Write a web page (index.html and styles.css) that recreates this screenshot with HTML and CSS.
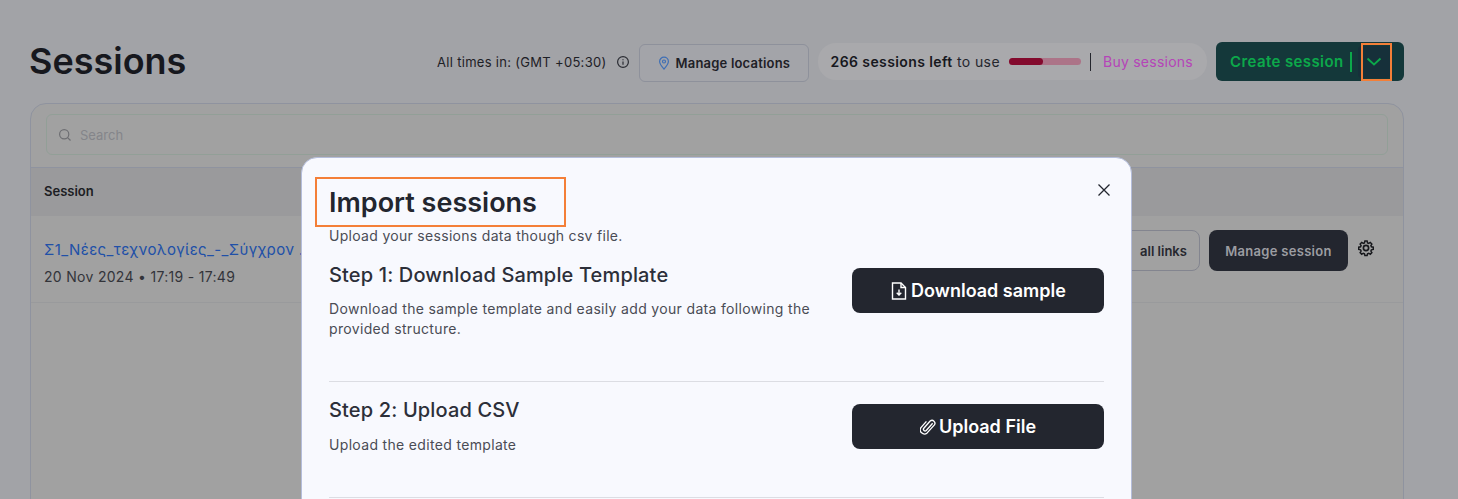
FILE: index.html
```html
<!DOCTYPE html>
<html lang="en">

<head>
    <meta charset="UTF-8">
    <meta name="viewport" content="width=device-width, initial-scale=1.0">
    <title>Sessions</title>
    <link rel="stylesheet" href="styles.css">
</head>

<body>

    <div class="page">
        <header class="top-bar">
            <h1>Sessions</h1>
            <div class="top-actions">
                <span class="timezone">All times in: (GMT +05:30)</span>
                <svg class="info-icon" width="14" height="14" viewBox="0 0 14 14" fill="none" stroke="#2a2c33" stroke-width="1.2">
                    <circle cx="7" cy="7" r="5.4" />
                    <path d="M7 6.4v3.4M7 4.2v1" />
                </svg>
                <button class="locations-btn">
                    <svg width="12" height="14" viewBox="0 0 12 14" fill="none" stroke="#3f6fb5" stroke-width="1.2">
                        <path d="M6 13C3.6 10.4 1.6 8.3 1.6 5.6a4.4 4.4 0 0 1 8.8 0C10.4 8.3 8.4 10.4 6 13z" />
                        <circle cx="6" cy="5.5" r="1.5" />
                    </svg>
                    Manage locations
                </button>
                <div class="usage-pill">
                    <span><b>266 sessions left</b> to use</span>
                    <div class="usage-bar">
                        <div class="usage-fill"></div>
                    </div>
                    <div class="usage-line"></div>
                    <a class="buy-link">Buy sessions</a>
                </div>
                <div class="create-btn">
                    <span class="create-label">Create session</span>
                    <span class="create-line"></span>
                    <span class="create-arrow">
                        <svg width="16" height="10" viewBox="0 0 16 10" fill="none" stroke="#0ca84a" stroke-width="1.8">
                            <path d="M1.500 1.500 8 7.500l6.500-6" />
                        </svg>
                    </span>
                    <span class="mark mark-arrow"></span>
                </div>
            </div>
        </header>

        <section class="card">
            <div class="search-wrap">
                <div class="search-box">
                    <svg width="14" height="14" viewBox="0 0 14 14" fill="none" stroke="#6d6e72" stroke-width="1.2">
                        <circle cx="6.200" cy="6.200" r="4.600" />
                        <path d="M9.600 9.600 12.500 12.500" />
                    </svg>
                    <span>Search</span>
                </div>
            </div>
            <div class="table-head">Session</div>
            <div class="table-row">
                <div class="session-info">
                    <a class="session-name">Σ1_Νέες_τεχνολογίες_-_Σύγχρον ...</a>
                    <p class="session-time">20 Nov 2024 • 17:19 - 17:49</p>
                </div>
                <div class="row-actions">
                    <button class="links-btn">all links</button>
                    <button class="manage-btn">Manage session</button>
                    <svg class="gear" width="18" height="18" viewBox="0 0 24 24" fill="none" stroke="#17181c" stroke-width="2.200">
                        <path d="M10.300 2.500h3.400l.6 2.800 1.800.8 2.400-1.500 2.400 2.400-1.500 2.400.8 1.800 2.800.6v3.400l-2.800.6-.8 1.800 1.500 2.400-2.400 2.400-2.400-1.500-1.800.8-.6 2.800h-3.400l-.6-2.800-1.800-.8-2.400 1.500-2.400-2.400 1.500-2.400-.8-1.800-2.800-.6v-3.400l2.800-.6.8-1.800-1.500-2.400 2.400-2.400 2.400 1.500 1.800-.8z" transform="translate(12 12) scale(.88) translate(-12 -13)" />
                        <circle cx="12" cy="12" r="3.500" />
                    </svg>
                </div>
            </div>
        </section>
    </div>

    <div class="modal">
        <svg class="modal-close" width="14" height="14" viewBox="0 0 14 14" fill="none" stroke="#23262f" stroke-width="1.300">
            <path d="M1.500 1.500 12.500 12.500M12.500 1.500 1.500 12.500" />
        </svg>
        <div class="modal-title-box">
            <h2>Import sessions</h2>
        </div>
        <p class="modal-sub">Upload your sessions data though csv file.</p>

        <div class="step step-one">
            <div class="step-text">
                <h3>Step 1: Download Sample Template</h3>
                <p>Download the sample template and easily add your data following the provided structure.</p>
            </div>
            <button class="step-btn">
                <svg width="18" height="20" viewBox="0 0 18 20" fill="none" stroke="#fff" stroke-width="1.400">
                    <path d="M2.500 2h8.500l4.500 4.500V18h-13z" />
                    <path d="M11 2v4.500h4.500M9 8.500v5.500M6.700 11.800 9 14l2.300-2.200" />
                </svg>
                Download sample
            </button>
        </div>

        <div class="step step-two">
            <div class="step-text">
                <h3>Step 2: Upload CSV</h3>
                <p>Upload the edited template</p>
            </div>
            <button class="step-btn">
                <svg width="16" height="18" viewBox="0 0 16 18" fill="none" stroke="#fff" stroke-width="1.400">
                    <path d="M13.500 5.500 6.800 13a1.700 1.700 0 0 1-2.500-2.300l6.600-7.500a3 3 0 0 1 4.400 4L7.800 15.500a4.300 4.300 0 0 1-6.300-5.800L7 3.500" transform="translate(-.3 0) scale(.96)" />
                </svg>
                Upload File
            </button>
        </div>
    </div>

</body>

</html>
```

FILE: styles.css
```css
* {
    box-sizing: border-box;
}

html,
body {
    height: 100%;
}

body {
    margin: 0;
    background: #a2a3a7;
    color: #17181e;
    font-family: Inter, "Noto Sans", sans-serif;
    overflow: hidden;
}

button {
    font-family: inherit;
    cursor: pointer;
}

.page {
    height: 499px;
    padding: 42px 54px 0 29px;
    overflow: hidden;
}

.top-bar {
    display: flex;
    justify-content: space-between;
    align-items: flex-start;
    height: 61px;
}

h1 {
    margin: 0;
    font-size: 36px;
    line-height: 39px;
    font-weight: 600;
    color: #17181e;
}

.top-actions {
    display: flex;
    align-items: center;
    height: 39px;
}

.timezone {
    font-size: 13px;
    color: #1e2026;
    letter-spacing: .3px;
}

.info-icon {
    margin-left: 9px;
    margin-right: 9px;
}

.locations-btn {
    display: flex;
    align-items: center;
    gap: 6px;
    width: 170px;
    height: 38px;
    margin-top: 2px;
    padding: 0 0 0 18px;
    background: #a3a4a9;
    border: 1px solid #8e919b;
    border-radius: 6px;
    font-size: 13px;
    font-weight: 600;
    letter-spacing: .2px;
    color: #1e2026;
}

.usage-pill {
    display: flex;
    align-items: center;
    height: 37px;
    margin-left: 9px;
    padding: 0 14px 0 13px;
    background: #a9a9ac;
    border-radius: 18px;
    font-size: 14px;
    letter-spacing: .4px;
    color: #24262d;
}

.usage-pill b {
    font-weight: 600;
    color: #17181e;
}

.usage-bar {
    width: 72px;
    height: 7px;
    margin-left: 9px;
    background: #ac7488;
    border-radius: 4px;
}

.usage-fill {
    width: 34px;
    height: 7px;
    background: #830a2d;
    border-radius: 4px;
}

.usage-line {
    width: 1px;
    height: 18px;
    margin: 0 12px 0 9px;
    background: #24262d;
}

.buy-link {
    color: #b544b8;
    letter-spacing: .25px;
}

.create-btn {
    position: relative;
    display: flex;
    align-items: center;
    width: 188px;
    height: 39px;
    margin-left: 9px;
    padding-left: 14px;
    background: #14383a;
    border-radius: 6px;
    font-size: 15px;
    font-weight: 600;
    letter-spacing: .4px;
    color: #0ca84a;
}

.create-line {
    width: 2px;
    height: 20px;
    margin-left: 6px;
    background: #0ca84a;
}

.create-arrow {
    display: flex;
    align-items: center;
    justify-content: center;
    width: 32px;
    height: 32px;
    margin-left: 6px;
    background: #16303a;
    border-radius: 4px;
}

.mark {
    position: absolute;
    border: 2px solid #f47f38;
}

.mark-arrow {
    left: 145px;
    top: 1px;
    width: 31px;
    height: 38px;
}

.card {
    height: 460px;
    margin-left: 1px;
    background: #a1a1a1;
    border: 1px solid #8f939f;
    border-radius: 16px;
    overflow: hidden;
}

.search-wrap {
    height: 64px;
    padding: 10px 15px 0;
    border-bottom: 1px solid #8f939f;
}

.search-box {
    display: flex;
    align-items: center;
    gap: 8px;
    height: 41px;
    padding-left: 11px;
    border: 1px solid #929f97;
    border-radius: 6px;
    font-size: 13px;
    color: #84858a;
}

.table-head {
    display: flex;
    align-items: center;
    height: 48px;
    padding-left: 13px;
    padding-bottom: 3px;
    background: #9a9a9c;
    font-size: 13px;
    font-weight: 600;
    color: #1c1d23;
}

.table-row {
    display: flex;
    justify-content: space-between;
    height: 87px;
    padding: 14px 28px 0 13px;
    border-bottom: 1px solid #999a9c;
}

.session-name {
    display: block;
    margin-top: 11px;
    font-size: 15px;
    line-height: 18px;
    letter-spacing: .4px;
    color: #2050a8;
    white-space: nowrap;
}

.session-time {
    margin: 9px 0 0;
    font-size: 14px;
    line-height: 18px;
    letter-spacing: .3px;
    color: #33343a;
}

.row-actions {
    display: flex;
    align-items: flex-start;
    gap: 9px;
}

.links-btn {
    width: 80px;
    height: 41px;
    padding: 0 0 0 7px;
    background: transparent;
    border: 1px solid #83858f;
    border-radius: 8px;
    font-size: 13px;
    font-weight: 600;
    color: #26272e;
}

.manage-btn {
    width: 139px;
    height: 41px;
    padding: 0;
    background: #23262f;
    border: none;
    border-radius: 8px;
    font-size: 13px;
    font-weight: 600;
    letter-spacing: .3px;
    color: #9c9da2;
}

.gear {
    margin-top: 9px;
}

.modal {
    position: absolute;
    left: 301px;
    top: 157px;
    width: 831px;
    height: 400px;
    padding: 19px 27px 0;
    background: #f8f9fe;
    border: 1px solid #b4bddb;
    border-radius: 16px;
}

.modal-close {
    position: absolute;
    right: 20px;
    top: 25px;
}

.modal-title-box {
    width: 251px;
    height: 50px;
    margin-left: -14px;
    padding-left: 12px;
    border: 2px solid #f47f38;
}

h2 {
    margin: 0;
    font-size: 27px;
    line-height: 48px;
    font-weight: 600;
    color: #23262f;
}

.modal-sub {
    margin: 0;
    font-size: 14px;
    line-height: 17px;
    letter-spacing: .3px;
    color: #4a4c55;
}

.step {
    display: flex;
    justify-content: space-between;
    border-bottom: 1px solid #dcdde3;
}

.step-one {
    height: 138px;
    padding-top: 19px;
}

.step-two {
    height: 116px;
    padding-top: 16px;
}

.step-text {
    width: 490px;
}

h3 {
    margin: 0;
    font-size: 20px;
    line-height: 24px;
    font-weight: 500;
    letter-spacing: .15px;
    color: #2c2f39;
}

.step-text p {
    margin: 12px 0 0;
    font-size: 14px;
    line-height: 20px;
    color: #4a4c55;
    letter-spacing: .33px;
}

.step-two .step-text p {
    margin-top: 13px;
}

.step-btn {
    display: flex;
    align-items: center;
    justify-content: center;
    gap: 3px;
    width: 252px;
    height: 45px;
    margin-top: 5px;
    background: #23262f;
    border: none;
    border-radius: 8px;
    font-size: 18px;
    font-weight: 600;
    color: #fff;
}

.step-two .step-btn {
    margin-top: 6px;
}
```
